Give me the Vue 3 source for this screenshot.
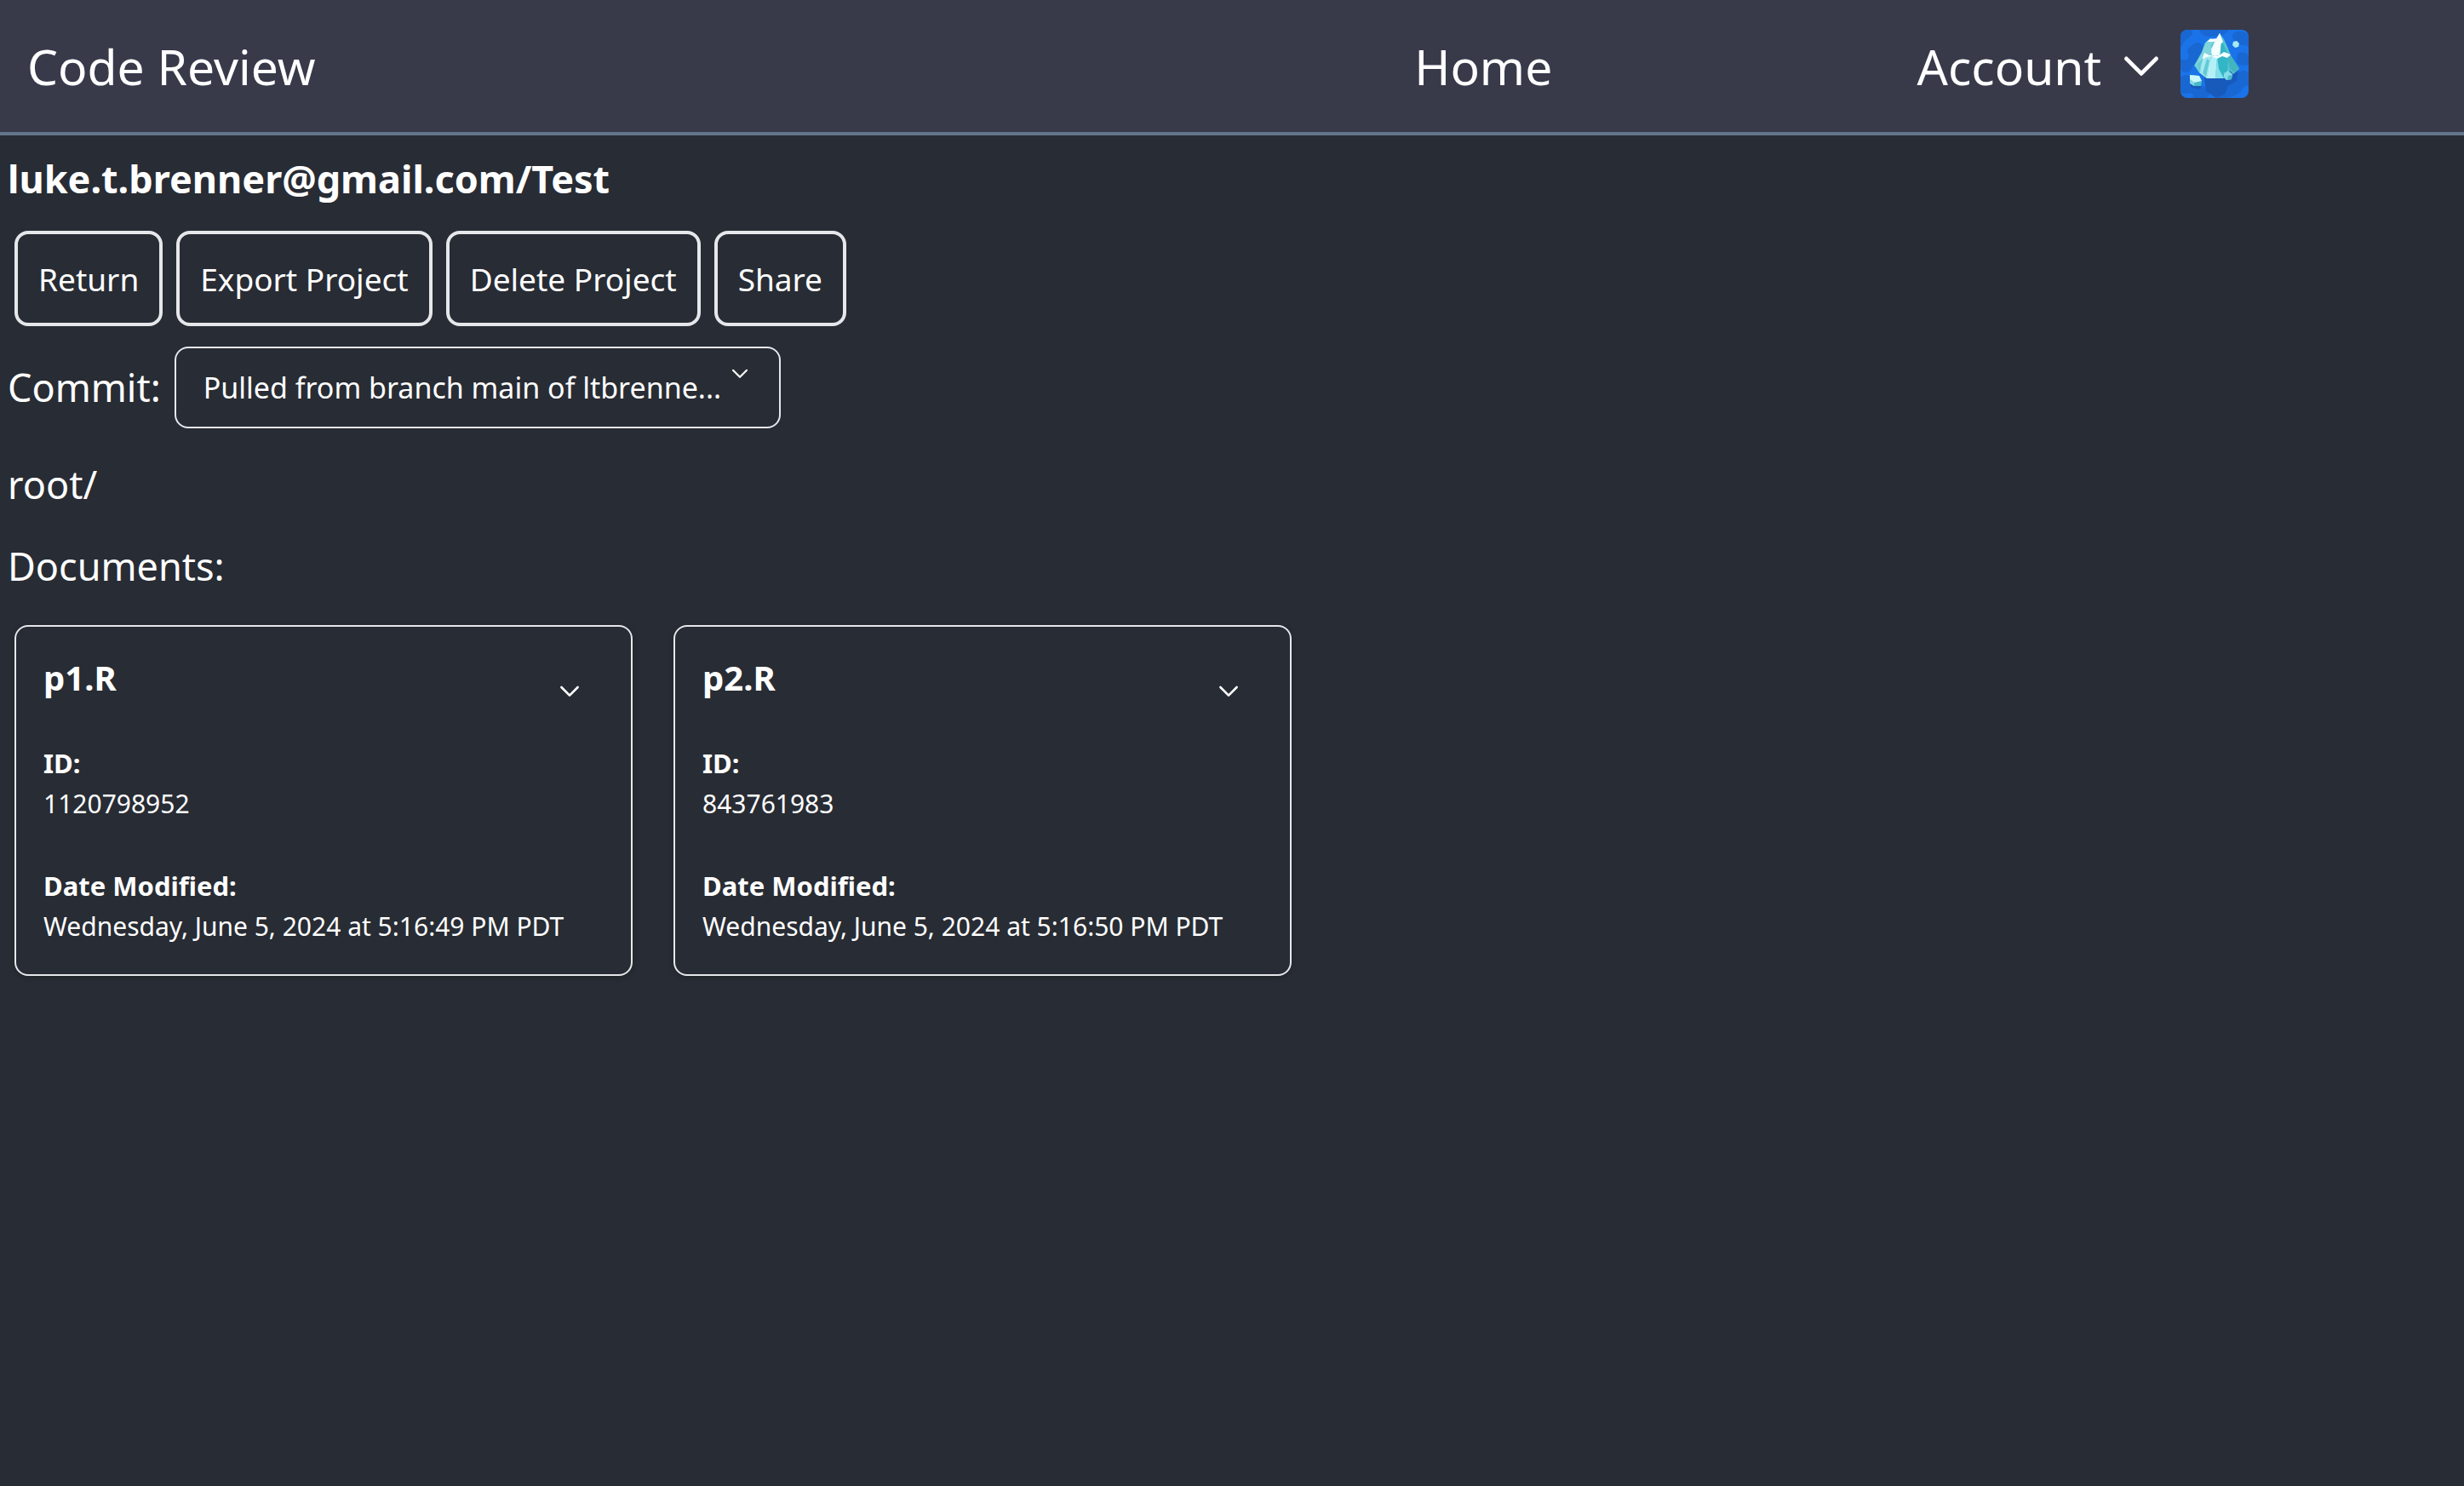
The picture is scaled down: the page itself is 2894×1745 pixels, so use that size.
<script setup>
const actions = ['Return', 'Export Project', 'Delete Project', 'Share']
const commits = ['Pulled from branch main of ltbrenne...']
const documents = [
  { name: 'p1.R', id: '1120798952', modified: 'Wednesday, June 5, 2024 at 5:16:49 PM PDT' },
  { name: 'p2.R', id: '843761983', modified: 'Wednesday, June 5, 2024 at 5:16:50 PM PDT' },
]
</script>

<template>
  <div class="page">
    <header class="navbar">
      <a class="nav-link brand" href="#">Code Review</a>
      <nav class="nav-home"><a class="nav-link" href="#">Home</a></nav>
      <div class="account">
        <button class="nav-link account-toggle" type="button">
          Account
          <svg class="chevron chevron-large" viewBox="0 0 24 24" aria-hidden="true">
            <path d="M2.4 7 L12 16.6 L21.6 7" />
          </svg>
        </button>
        <svg class="avatar" viewBox="0 0 80 80" role="img" aria-label="Profile picture">
          <rect width="80" height="80" fill="#1a73e8" />
          <g fill="#1967d2">
            <path d="M0 0H12C18 4 10 9 6 12S3 20 0 20ZM22 0H56C54 6 46 8 38 7C30 10 24 6 22 0ZM64 3C70 0 76 3 80 5V20C74 16 70 20 66 15C61 12 59 6 64 3Z" />
            <path d="M14 18C20 12 28 16 26 24C24 34 16 38 13 46C9 52 2 50 0 46V34C6 38 12 34 9 28C7 23 10 20 14 18ZM67 28C72 25 78 27 80 30V42C74 40 70 44 66 38ZM0 56C8 50 14 54 18 62C24 68 31 65 34 72C36 78 30 80 28 80H14C18 75 10 72 5 75C1 76 0 72 0 72ZM68 50C74 46 78 49 80 51V66C74 63 73 72 66 76C60 80 54 79 52 80H44C45 75 52 72 55 68C60 62 62 54 68 50Z" />
            <ellipse cx="12" cy="25" rx="3" ry="2" />
            <ellipse cx="8" cy="73" rx="3" ry="2" />
          </g>
          <path d="M28 56L68 46L66 60L56 66L52 76L42 80L30 72ZM11 63L25 66L22 70L13 68Z" fill="#185abc" />
          <path d="M35 10L42 12L46 4L51 11L56 22L59 30L69 46L62 52L58 48L51 57L31 57L22 50L16 42L25 26L29 15Z" fill="#57c2cf" />
          <path d="M35 10L29 16L25 27L17 42L22 45L27 31L37 30L36 18L41 12Z" fill="#80d5dd" />
          <path d="M46 4L48 15L46 31L37 30L36 23L41 12Z" fill="#e9fbfd" />
          <path d="M48 12L54 25L56 30L55 50L51 57L45 46L43 33L47 29Z" fill="#32b5c5" />
          <path d="M27 30L37 30L34 39L31 57L22 50L19 42Z" fill="#a5e8ef" />
          <path d="M37 31L43 32L41 57L31 57L34 39Z" fill="#b4f0f7" />
          <path d="M43 32L45 46L51 57L41 57Z" fill="#83dfeb" />
          <path d="M28 27L34 30L44 31L51 26L59 29L55 33L49 31L43 34L36 31L30 32L25 36ZM35 11L43 10L40 14L31 14ZM46 4L50 14L47 17L46 25L41 31L36 27L40 20Z" fill="#f5feff" />
          <path d="M55 33L59 30L69 45L63 50L58 46Z" fill="#43b5c2" />
          <path d="M19 41L27 32L24 42L23 51ZM31 34L34 36L30 55L26 51Z" fill="#62c9d5" />
          <path d="M51 51L56 48L61 52L60 58L54 59L51 56Z" fill="#83dde7" />
          <path d="M56 54L60 53L60 58L55 59Z" fill="#4abccc" />
          <path d="M11 53L22 54L25 61L24 66L16 66L11 62Z" fill="#48b9ca" />
          <path d="M11 53L22 54L25 60L16 62L11 58Z" fill="#c9f8fc" />
          <path d="M11 58L16 62V66L11 63Z" fill="#82d9e4" />
          <path d="M62 14L66 13L69 16L68 20L64 21L61 18Z" fill="#a6ebf4" />
        </svg>
      </div>
    </header>

    <main class="content">
      <h1 class="title">luke.t.brenner@gmail.com/Test</h1>

      <div class="actions">
        <button v-for="action in actions" :key="action" class="action" type="button">{{ action }}</button>
      </div>

      <div class="commit">
        <label class="label" for="commit">Commit:</label>
        <div class="select-wrap">
          <select id="commit" class="select">
            <option v-for="commit in commits" :key="commit">{{ commit }}</option>
          </select>
          <svg class="chevron chevron-small select-chevron" viewBox="0 0 24 24" aria-hidden="true">
            <path d="M2.4 7 L12 16.6 L21.6 7" />
          </svg>
        </div>
      </div>

      <p class="label path">root/</p>
      <h2 class="label documents-title">Documents:</h2>

      <section class="cards">
        <article v-for="doc in documents" :key="doc.id" class="card">
          <div class="card-head">
            <h3 class="card-title">{{ doc.name }}</h3>
            <button class="card-toggle" type="button" :aria-label="`Options for ${doc.name}`">
              <svg class="chevron chevron-medium" viewBox="0 0 24 24" aria-hidden="true">
                <path d="M2.4 7 L12 16.6 L21.6 7" />
              </svg>
            </button>
          </div>
          <dl class="details">
            <div>
              <dt>ID:</dt>
              <dd>{{ doc.id }}</dd>
            </div>
            <div>
              <dt>Date Modified:</dt>
              <dd>{{ doc.modified }}</dd>
            </div>
          </dl>
        </article>
      </section>
    </main>
  </div>
</template>

<style>
body {
  background: #282c34;
}
</style>

<style scoped>
.page {
  min-height: 100vh;
  color: #fff;
  background: #282c34;
  font-family: "Noto Sans", "Open Sans", sans-serif;
}

.page * {
  box-sizing: border-box;
}

button,
select {
  padding: 0;
  border: 0;
  background: transparent;
  color: inherit;
  font: inherit;
}

h1,
h2,
h3,
p,
dl,
dd {
  margin: 0;
}

.navbar {
  display: grid;
  grid-template-columns: 57.4% 20.4% 1fr;
  align-items: center;
  padding: 35px 0 34px;
  border-bottom: 4px solid #64748b;
  background: #383a4a;
}

.nav-link {
  color: inherit;
  font-size: 57px;
  line-height: 80px;
  text-decoration: none;
}

.brand {
  padding-left: 32px;
}

.account {
  display: flex;
  align-items: center;
  gap: 24px;
}

.account-toggle {
  display: flex;
  align-items: center;
  gap: 25px;
}

.chevron {
  display: block;
  fill: none;
  stroke: currentColor;
  stroke-width: 2.6;
  stroke-linecap: round;
  stroke-linejoin: round;
}

.chevron-large {
  width: 44px;
  height: 44px;
}

.chevron-medium {
  width: 24px;
  height: 24px;
}

.chevron-small {
  width: 20px;
  height: 20px;
}

.avatar {
  display: block;
  width: 80px;
  height: 80px;
  margin-bottom: 6px;
  border-radius: 8px;
}

.content {
  padding: 15px 9px 32px;
}

.title {
  font-size: 45px;
  font-weight: 700;
  line-height: 72px;
}

.actions {
  display: flex;
  flex-wrap: wrap;
  gap: 16px;
  padding: 25px 8px 24px;
}

.action {
  height: 112px;
  padding: 0 24px;
  border: 4px solid #e5e7eb;
  border-radius: 16px;
  font-size: 37px;
}

.commit {
  display: flex;
  align-items: center;
  gap: 16px;
}

.label {
  font-size: 45px;
  font-weight: 400;
  line-height: 72px;
}

.select-wrap {
  position: relative;
  width: 712px;
}

.select {
  display: block;
  width: 100%;
  height: 96px;
  padding: 0 64px 0 32px;
  border: 2px solid #e5e7eb;
  border-radius: 16px;
  font-size: 34px;
  appearance: none;
}

.select-chevron {
  position: absolute;
  top: 22px;
  right: 38px;
  pointer-events: none;
}

.path {
  margin-top: 30px;
}

.documents-title {
  margin-top: 24px;
}

.cards {
  display: flex;
  flex-wrap: wrap;
  gap: 48px;
  padding: 33px 8px 0;
}

.card {
  width: 726px;
  padding: 32px;
  border: 2px solid #e5e7eb;
  border-radius: 16px;
  box-shadow: 0 2px 6px rgb(0 0 0 / 20%);
}

.card-head {
  display: flex;
  align-items: flex-end;
  justify-content: space-between;
  padding-right: 28px;
}

.card-title {
  font-size: 40px;
  font-weight: 700;
  line-height: 56px;
}

.details {
  display: grid;
  gap: 48px;
  margin-top: 48px;
  font-size: 30px;
  line-height: 48px;
}

.details dt {
  font-size: 31px;
  font-weight: 700;
}
</style>
